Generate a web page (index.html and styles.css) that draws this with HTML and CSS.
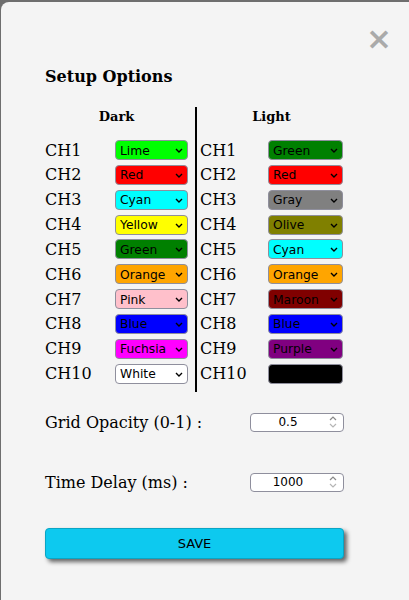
FILE: index.html
```html
<!DOCTYPE html>
<html>
<head>
<meta charset="utf-8">
<link rel="stylesheet" href="styles.css">
</head>
<body>
<div class="modal">
  <div class="topbar"><span class="close">&times;</span></div>
  <h3 class="title">Setup Options</h3>
  <div class="channels">
    <div class="col col-dark">
      <div class="head">Dark</div>
      <div class="row"><span class="lbl">CH1</span><span class="selwrap"><select class="sel c-lime"><option>Lime</option></select><svg class="chev" viewBox="0 0 8 5"><path d="M1 1L4 4L7 1"/></svg></span></div>
      <div class="row"><span class="lbl">CH2</span><span class="selwrap"><select class="sel c-red"><option>Red</option></select><svg class="chev" viewBox="0 0 8 5"><path d="M1 1L4 4L7 1"/></svg></span></div>
      <div class="row"><span class="lbl">CH3</span><span class="selwrap"><select class="sel c-cyan"><option>Cyan</option></select><svg class="chev" viewBox="0 0 8 5"><path d="M1 1L4 4L7 1"/></svg></span></div>
      <div class="row"><span class="lbl">CH4</span><span class="selwrap"><select class="sel c-yellow"><option>Yellow</option></select><svg class="chev" viewBox="0 0 8 5"><path d="M1 1L4 4L7 1"/></svg></span></div>
      <div class="row"><span class="lbl">CH5</span><span class="selwrap"><select class="sel c-green"><option>Green</option></select><svg class="chev" viewBox="0 0 8 5"><path d="M1 1L4 4L7 1"/></svg></span></div>
      <div class="row"><span class="lbl">CH6</span><span class="selwrap"><select class="sel c-orange"><option>Orange</option></select><svg class="chev" viewBox="0 0 8 5"><path d="M1 1L4 4L7 1"/></svg></span></div>
      <div class="row"><span class="lbl">CH7</span><span class="selwrap"><select class="sel c-pink"><option>Pink</option></select><svg class="chev" viewBox="0 0 8 5"><path d="M1 1L4 4L7 1"/></svg></span></div>
      <div class="row"><span class="lbl">CH8</span><span class="selwrap"><select class="sel c-blue"><option>Blue</option></select><svg class="chev" viewBox="0 0 8 5"><path d="M1 1L4 4L7 1"/></svg></span></div>
      <div class="row"><span class="lbl">CH9</span><span class="selwrap"><select class="sel c-fuchsia"><option>Fuchsia</option></select><svg class="chev" viewBox="0 0 8 5"><path d="M1 1L4 4L7 1"/></svg></span></div>
      <div class="row"><span class="lbl">CH10</span><span class="selwrap"><select class="sel c-white"><option>White</option></select><svg class="chev" viewBox="0 0 8 5"><path d="M1 1L4 4L7 1"/></svg></span></div>
    </div>
    <div class="col col-light">
      <div class="head">Light</div>
      <div class="row"><span class="lbl">CH1</span><span class="selwrap"><select class="sel c-green"><option>Green</option></select><svg class="chev" viewBox="0 0 8 5"><path d="M1 1L4 4L7 1"/></svg></span></div>
      <div class="row"><span class="lbl">CH2</span><span class="selwrap"><select class="sel c-red"><option>Red</option></select><svg class="chev" viewBox="0 0 8 5"><path d="M1 1L4 4L7 1"/></svg></span></div>
      <div class="row"><span class="lbl">CH3</span><span class="selwrap"><select class="sel c-gray"><option>Gray</option></select><svg class="chev" viewBox="0 0 8 5"><path d="M1 1L4 4L7 1"/></svg></span></div>
      <div class="row"><span class="lbl">CH4</span><span class="selwrap"><select class="sel c-olive"><option>Olive</option></select><svg class="chev" viewBox="0 0 8 5"><path d="M1 1L4 4L7 1"/></svg></span></div>
      <div class="row"><span class="lbl">CH5</span><span class="selwrap"><select class="sel c-cyan"><option>Cyan</option></select><svg class="chev" viewBox="0 0 8 5"><path d="M1 1L4 4L7 1"/></svg></span></div>
      <div class="row"><span class="lbl">CH6</span><span class="selwrap"><select class="sel c-orange"><option>Orange</option></select><svg class="chev" viewBox="0 0 8 5"><path d="M1 1L4 4L7 1"/></svg></span></div>
      <div class="row"><span class="lbl">CH7</span><span class="selwrap"><select class="sel c-maroon"><option>Maroon</option></select><svg class="chev" viewBox="0 0 8 5"><path d="M1 1L4 4L7 1"/></svg></span></div>
      <div class="row"><span class="lbl">CH8</span><span class="selwrap"><select class="sel c-blue"><option>Blue</option></select><svg class="chev" viewBox="0 0 8 5"><path d="M1 1L4 4L7 1"/></svg></span></div>
      <div class="row"><span class="lbl">CH9</span><span class="selwrap"><select class="sel c-purple"><option>Purple</option></select><svg class="chev" viewBox="0 0 8 5"><path d="M1 1L4 4L7 1"/></svg></span></div>
      <div class="row"><span class="lbl">CH10</span><span class="selwrap"><select class="sel c-black"><option>Black</option></select><svg class="chev" viewBox="0 0 8 5"><path d="M1 1L4 4L7 1"/></svg></span></div>
    </div>
  </div>
  <div class="field field-opacity"><span class="flabel">Grid Opacity (0-1) :</span><span class="numwrap"><input class="num" type="number" value="0.5" step="0.1" min="0" max="1"><svg class="spin" viewBox="0 0 10 18"><path class="up" d="M2 7L5 4L8 7"/><path class="down" d="M2 11L5 14L8 11"/></svg></span></div>
  <div class="field field-delay"><span class="flabel">Time Delay (ms) :</span><span class="numwrap"><input class="num" type="number" value="1000"><svg class="spin" viewBox="0 0 10 18"><path class="up" d="M2 7L5 4L8 7"/><path class="down" d="M2 11L5 14L8 11"/></svg></span></div>
  <button class="save">SAVE</button>
</div>
</body>
</html>
```
FILE: styles.css
```css
html, body {
  margin: 0;
  height: 100%;
  overflow: hidden;
}
body {
  background: #6e6e6e;
  font-family: "DejaVu Serif", serif;
}
.modal {
  margin: 2px -20px 0 1px;
  background: #f4f4f4;
  border-radius: 8px 0 0 0;
  height: 620px;
  padding: 0 0 0 44px;
  box-sizing: border-box;
}
.topbar {
  height: 64px;
  display: flex;
  justify-content: flex-end;
  padding: 22px 37px 0 0;
  box-sizing: border-box;
}
.close {
  color: #aaaaaa;
  font-family: "DejaVu Sans", sans-serif;
  font-size: 31px;
  font-weight: bold;
  line-height: 28px;
}
.title {
  margin: 0;
  font-size: 16px;
  font-weight: bold;
  line-height: 22px;
  height: 41px;
}
.channels {
  display: flex;
}
.col {
  display: flex;
  flex-direction: column;
  padding-bottom: 6px;
}
.col-dark {
  width: 150px;
  border-right: 2px solid #000;
}
.col-light {
  padding-left: 3px;
}
.head {
  height: 30.6px;
  line-height: 20px;
  font-size: 13px;
  font-weight: bold;
  text-align: center;
  width: 143px;
}
.row {
  display: flex;
  align-items: center;
  height: 24.85px;
}
.lbl {
  font-size: 16px;
}
.col-dark .lbl { width: 70px; }
.col-light .lbl { width: 68px; }
.selwrap {
  position: relative;
  display: block;
  height: 20px;
}
.sel {
  -webkit-appearance: none;
  appearance: none;
  display: block;
  color: #000;
  height: 20px;
  margin: 0;
  padding: 1px 0 0 4px;
  border: 1px solid #8f8f9d;
  border-radius: 4px;
  font-family: "DejaVu Sans", sans-serif;
  font-size: 12.3px;
  box-sizing: border-box;
}
.chev {
  position: absolute;
  right: 5px;
  top: 8px;
  width: 8px;
  height: 5px;
  pointer-events: none;
}
.chev path {
  fill: none;
  stroke: #000;
  stroke-width: 1.4;
}
.col-dark .sel { width: 73px; }
.col-light .sel { width: 75px; }
.c-lime { background-color: #00ff00; }
.c-red { background-color: #ff0000; }
.c-cyan { background-color: #00ffff; }
.c-yellow { background-color: #ffff00; }
.c-green { background-color: #008000; }
.c-orange { background-color: #ffa500; }
.c-pink { background-color: #ffc0cb; }
.c-blue { background-color: #0000ff; }
.c-fuchsia { background-color: #ff00ff; }
.c-white { background-color: #ffffff; }
.c-gray { background-color: #808080; }
.c-olive { background-color: #808000; }
.c-maroon { background-color: #800000; }
.c-purple { background-color: #800080; }
.c-black { background-color: #000000; }
.field {
  display: flex;
  align-items: center;
  width: 299px;
  justify-content: space-between;
  height: 20px;
}
.field-opacity { margin-top: 20px; }
.field-delay { margin-top: 40px; }
.flabel {
  font-size: 16px;
}
.numwrap {
  position: relative;
  display: block;
  height: 19px;
}
.num {
  -moz-appearance: textfield;
  appearance: textfield;
  display: block;
  margin: 0;
  width: 94px;
  height: 19px;
  box-sizing: border-box;
  border: 1px solid #8f8f9d;
  border-radius: 4px;
  background: #fff;
  padding: 0 18px 0 0;
  text-align: center;
  font-family: "DejaVu Sans", sans-serif;
  font-size: 12px;
  color: #000;
}
.num::-webkit-inner-spin-button,
.num::-webkit-outer-spin-button {
  -webkit-appearance: none;
  margin: 0;
}
.spin {
  position: absolute;
  right: 6px;
  top: 0.5px;
  width: 10px;
  height: 18px;
  pointer-events: none;
}
.spin path {
  fill: none;
  stroke-width: 1.2;
}
.spin .up { stroke: #8a8a8a; }
.spin .down { stroke: #b5b5b5; }
.save {
  display: block;
  margin-top: 36px;
  width: 299px;
  height: 31px;
  background: #0dc9ef;
  border: 1px solid #0aa5c4;
  border-radius: 4px;
  box-shadow: 3px 3px 4px #666;
  font-family: "DejaVu Sans", sans-serif;
  font-size: 13px;
  color: #000;
}
```
